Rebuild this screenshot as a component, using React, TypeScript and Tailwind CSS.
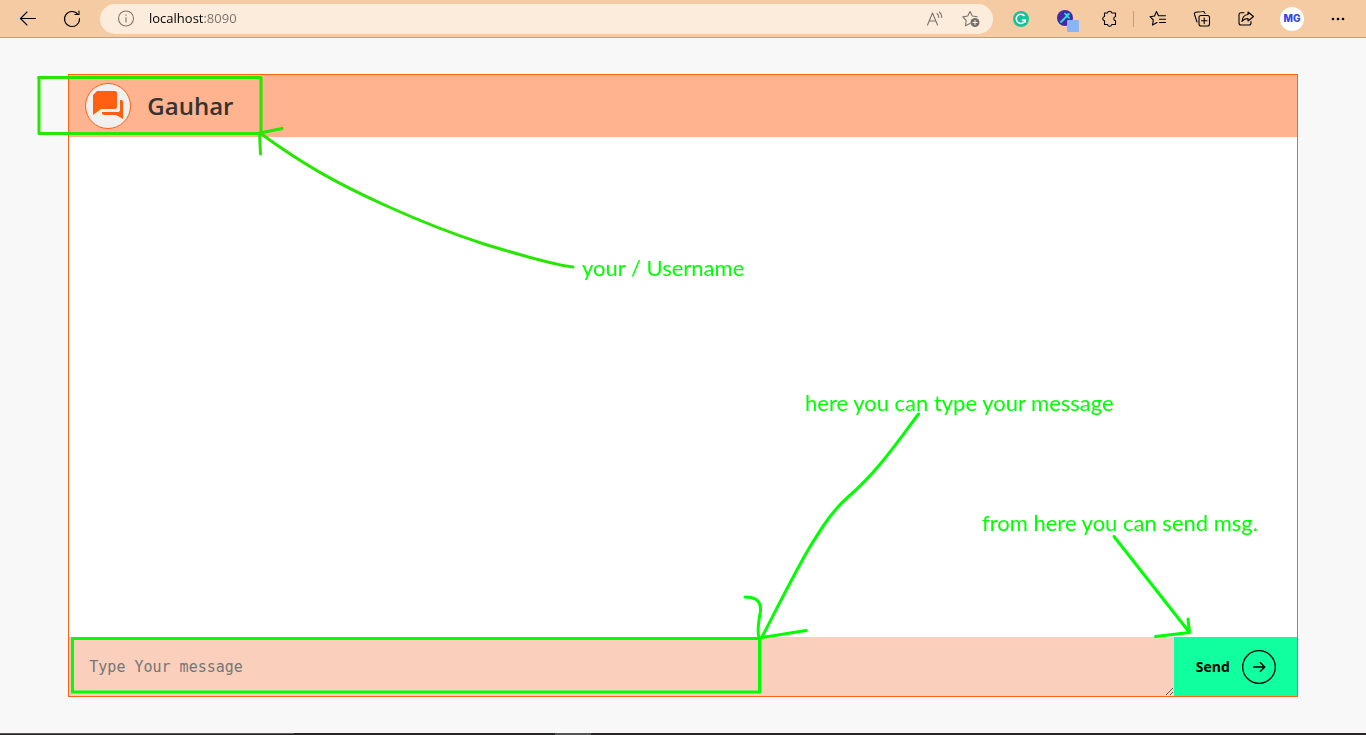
import React from "react";

const uiFont = "font-['Open_Sans','Noto_Sans',sans-serif]";

function Tool({ label, children, className = "" }: { label: string; children: React.ReactNode; className?: string }) {
  return (
    <button type="button" aria-label={label} className={`flex size-6 shrink-0 items-center justify-center ${className}`}>
      {children}
    </button>
  );
}

function Icon({ children }: { children: React.ReactNode }) {
  return (
    <svg
      width="20"
      height="20"
      viewBox="0 0 20 20"
      fill="none"
      stroke="currentColor"
      strokeWidth="1.1"
      strokeLinecap="round"
      strokeLinejoin="round"
      aria-hidden="true"
    >
      {children}
    </svg>
  );
}

function BrowserBar() {
  return (
    <header className="flex h-[38px] shrink-0 items-center border-b border-[#c39f7c] bg-[#f5cba3] px-4 text-black">
      <Tool label="Back">
        <Icon>
          <path d="M17.500 9.500H2.500M9 3L2.500 9.500 9 16" />
        </Icon>
      </Tool>
      <Tool label="Refresh" className="ml-5">
        <Icon>
          <path d="M16 5.500A7.500 7.500 0 1 0 17.500 9.500M17 2V5.500H13" />
        </Icon>
      </Tool>
      <div className="ml-4 flex h-[30px] min-w-0 flex-1 items-center rounded-full bg-[#fcecdc] pr-2.5 pl-3.5 text-[#7d746c]">
        <Tool label="Site information">
          <Icon>
            <circle cx="10" cy="9.500" r="7.500" />
            <path d="M10 8.500V13M10 5.800V6.200" />
          </Icon>
        </Tool>
        <input
          type="text"
          aria-label="Address"
          defaultValue="localhost:8090"
          className={`ml-[11px] min-w-0 flex-1 bg-[linear-gradient(to_right,#000_54px,#777069_54px)] bg-clip-text text-[13px] text-transparent outline-none ${uiFont}`}
        />
        <Tool label="Read aloud">
          <Icon>
            <path d="M2.500 16L7.500 4 12.500 16M4.300 12H10.700M12 4.500Q13.800 6 13.800 8.500M14.500 3Q17 5.500 16.800 8.500" />
          </Icon>
        </Tool>
        <Tool label="Add to favorites" className="ml-3">
          <Icon>
            <path d="M9 14.500L4.500 16.700 5.200 11.500 1.800 7.900 6.700 7 9 2.500 11.300 7 16.200 7.800" />
            <circle cx="14" cy="13.500" r="4.500" fill="#777069" stroke="none" />
            <path d="M14 11.500V15.500M12 13.500H16" stroke="#fcecdc" />
          </Icon>
        </Tool>
      </div>
      <div className="ml-4 flex shrink-0 items-center gap-5">
        <Tool label="Grammar checker">
          <svg width="16" height="16" viewBox="0 0 16 16" aria-hidden="true">
            <circle cx="8" cy="8" r="8" fill="#15c39a" />
            <path d="M11.500 5A4.600 4.600 0 1 0 12.300 9H8.800M12.300 9V11.500" fill="none" stroke="#fff" strokeWidth="1.500" />
          </svg>
        </Tool>
        <Tool label="Color extension">
          <svg width="24" height="24" viewBox="0 0 24 24" className="overflow-visible" aria-hidden="true">
            <circle cx="12" cy="11" r="8" fill="#4527a8" />
            <path d="M7.500 15.500L16 7M11.500 6L16.500 11.500M12.500 8.500L16.500 6.500" fill="none" stroke="#1de5e0" strokeWidth="1.800" />
            <rect x="14" y="13" width="12" height="12" rx="1" fill="#8ab4f8" />
          </svg>
        </Tool>
        <Tool label="Extensions">
          <Icon>
            <path d="M5.500 4H8.500A2.200 2.200 0 0 1 12.800 4H16.500V7.500A2.200 2.200 0 0 0 16.500 11.800V15.500H12.800A2.200 2.200 0 0 1 8.500 15.500H5.500V11.800A2.200 2.200 0 0 1 5.500 7.500Z" />
          </Icon>
        </Tool>
      </div>
      <div className="ml-3 h-4 w-px bg-[#c39f7c]" />
      <div className="ml-3 flex shrink-0 items-center gap-5">
        <Tool label="Favorites">
          <Icon>
            <path d="M9 13.500L4.500 16 5.300 11 2 7.700 6.500 7 8.500 2.500 10.500 6.700H17.500M11.500 10.200H17.500M11.500 13.500H17.500" />
          </Icon>
        </Tool>
        <Tool label="Collections">
          <Icon>
            <path d="M5 13L2.500 5.500Q2 3.800 3.800 3.300L10.500 2.500Q12.500 2.200 13 4.500" />
            <rect x="7" y="6.500" width="10.500" height="10.500" rx="2" />
            <path d="M12.200 9V14.500M9.500 11.700H15" />
          </Icon>
        </Tool>
        <Tool label="Share">
          <Icon>
            <path d="M8 3.800H5Q3 3.800 3 5.800V14Q3 16 5 16H13Q15 16 15 14V12.500" />
            <path d="M12 3L17.500 7.500 12 12V9.500Q8 9.500 6 12.500 6.500 6 12 5.500Z" />
          </Icon>
        </Tool>
        <button
          type="button"
          aria-label="Profile"
          className="ml-0.5 flex size-6 shrink-0 items-center justify-center rounded-full bg-white font-['Inter',sans-serif] text-[10px] font-extrabold text-[#3046e8]"
        >
          MG
        </button>
        <Tool label="Settings and more" className="ml-0.5">
          <svg width="16" height="4" viewBox="0 0 16 4" aria-hidden="true">
            <circle cx="3" cy="2" r="1.300" />
            <circle cx="8" cy="2" r="1.300" />
            <circle cx="13" cy="2" r="1.300" />
          </svg>
        </Tool>
      </div>
    </header>
  );
}

function Annotations() {
  const note = "absolute font-['Lato',sans-serif] text-[22px] leading-7 whitespace-nowrap text-[#00ff00]";
  return (
    <div className="pointer-events-none absolute top-0 left-0">
      <svg
        width="1366"
        height="735"
        viewBox="0 0 1366 735"
        fill="none"
        strokeWidth="3"
        strokeLinecap="round"
        strokeLinejoin="round"
        className="max-w-none"
        aria-hidden="true"
      >
        <g stroke="#27e600">
          <path d="M38.500 77.500H261V133.500H39V78" />
          <path d="M573 267C555 265 520 255 484 244C450 233 420 221 389 207C340 185 305 166 260 133M282 128.500L260 133 259.500 133 260.500 154" />
        </g>
        <g stroke="#00ff00">
          <path d="M72.500 638.500H759.500V692H72.500Z" strokeLinejoin="miter" />
          <path d="M918.500 414C896 444 877 472 848 497C833 510 822 527 808 550C792 578 777 608 762 637M745 597C757 597 761 602 760.500 611C758 624 757 632 759 638L806 630.500" />
          <path d="M1114 536.500L1189.500 632.500 1188 619M1189.500 632.500L1155.500 636.500" />
        </g>
      </svg>
      <p className={`${note} top-[254px] left-[582px]`}>your / Username</p>
      <p className={`${note} top-[389px] left-[805px]`}>here you can type your message</p>
      <p className={`${note} top-[509px] left-[982px]`}>from here you can send msg.</p>
    </div>
  );
}

export default function App() {
  return (
    <div className="relative flex min-h-screen flex-col overflow-hidden bg-[#f8f8f8]">
      <BrowserBar />
      <main className="flex flex-1 flex-col px-[5%] py-9">
        <section className="flex flex-1 flex-col border border-[#ff6314] bg-white">
          <div className="flex h-[62px] shrink-0 items-center gap-4 bg-[#ffb38e] px-4">
            <svg width="46" height="46" viewBox="0 0 46 46" aria-hidden="true">
              <circle cx="23" cy="23" r="22.500" fill="#f0f0f0" stroke="#ff6314" />
              <path fill="#ff5f10" d="M12 8H30Q32 8 32 10V24Q32 26 30 26H16L8 32V12Z" />
              <path fill="#ff5f10" d="M35 17H36.500Q38 17 38 18.500V36L31 32H19Q17 32 17 29.500V29H33Q35 29 35 27Z" />
            </svg>
            <h1 className={`text-2xl font-semibold text-[#333333] ${uiFont}`}>Gauhar</h1>
          </div>
          <div className="flex-1" />
          <form className="flex h-[59px] shrink-0" onSubmit={(e) => e.preventDefault()}>
            <textarea
              aria-label="Message"
              placeholder="Type Your message"
              className="h-full min-w-0 flex-1 bg-[#fad0bd] px-5 py-[18px] font-['DejaVu_Sans_Mono',monospace] text-[15px] leading-6 text-[#333333] outline-none placeholder:text-[#757575]"
            />
            <button
              type="submit"
              className={`flex w-[123px] shrink-0 items-center gap-3 bg-[#10ff9f] pl-[22px] text-sm font-bold text-black ${uiFont}`}
            >
              Send
              <svg width="34" height="34" viewBox="0 0 34 34" fill="none" stroke="currentColor" strokeWidth="1.300" aria-hidden="true">
                <circle cx="17" cy="17" r="16.300" />
                <path d="M11 17H22.500M18 12.200L22.700 17 18 21.800" strokeWidth="1.500" />
              </svg>
            </button>
          </form>
        </section>
      </main>
      <footer className="flex h-0.5 shrink-0 bg-[#272525]">
        <div className="h-px w-[294px] bg-[#5a5856]" />
        <div className="ml-[261px] w-9 bg-[#555555]" />
      </footer>
      <Annotations />
    </div>
  );
}
